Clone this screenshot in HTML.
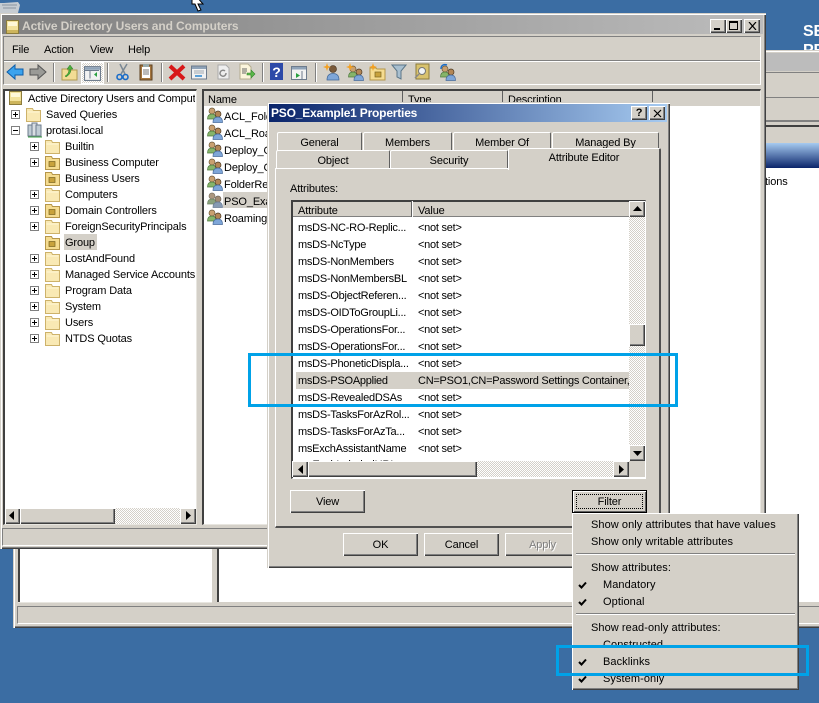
<!DOCTYPE html>
<html><head><meta charset="utf-8"><title>AD</title>
<style>
html,body{margin:0;padding:0}
body{width:819px;height:703px;overflow:hidden;background:#3b6da3;position:relative;font:11px "Liberation Sans",sans-serif;color:#000;letter-spacing:-.13px}
div,span,svg{position:absolute;box-sizing:border-box}
.t{white-space:nowrap;line-height:14px;height:14px;margin-top:2px}
.g{background:#d4d0c8}
.w{background:#fff}
.b{background:#d4d0c8;box-shadow:inset 1px 1px #fff,inset -1px -1px #404040,inset -2px -2px #808080}
.win{background:#d4d0c8;box-shadow:inset 1px 1px #d4d0c8,inset 2px 2px #fff,inset -1px -1px #404040,inset -2px -2px #808080}
.sunk{border-top:1px solid #808080;border-left:1px solid #808080;border-bottom:1px solid #fff;border-right:1px solid #fff}
.pane{background:#fff;border-top:2px solid #404040;border-left:2px solid #404040;border-bottom:1px solid #e8e6e0;border-right:1px solid #e8e6e0}
.chk{background:repeating-conic-gradient(#d4d0c8 0 25%,#fff 0 50%) 0 0/2px 2px}
.tab{background:#d4d0c8;border-top:1px solid #fff;border-left:1px solid #fff;border-right:1px solid #606060;border-radius:2px 2px 0 0}
.c{text-align:center}
.sep{width:2px;height:19px;top:63px;background:linear-gradient(90deg,#808080 50%,#fff 50%)}
.hl{border:3px solid #00a2e8}
.ck{left:578px;width:9px;height:8px}
</style></head><body>
<svg width="0" height="0" style="position:absolute">
<defs>
<symbol id="folder" viewBox="0 0 15 15"><path d="M.5 1.500h6l1 2h7v11H.5z" fill="#f9e9b4" stroke="#cdb26a"/><path d="M1.500 4.500h12v1h-12z" fill="#fff6d6"/></symbol>
<symbol id="ou" viewBox="0 0 15 15"><path d="M.5 1.500h6l1 2h7v11H.5z" fill="#f5dc90" stroke="#b5964a"/><rect x="4" y="6.500" width="6" height="5" fill="#c8a23c" stroke="#7a6420" stroke-width=".7"/></symbol>
<symbol id="group" viewBox="0 0 16 16"><circle cx="5" cy="4" r="3" fill="#c9a070" stroke="#6e5a3a" stroke-width=".7"/><path d="M0.500 12c0-4 2-5 4.500-5s4 1 4 5z" fill="#86b46a" stroke="#4d7a3e" stroke-width=".7"/><circle cx="11" cy="7" r="3" fill="#b38655" stroke="#4d3b25" stroke-width=".7"/><path d="M6 15.500c0-4 2-5.500 5-5.500s4.500 1.500 4.500 5.500z" fill="#7ea6d8" stroke="#4a6c9c" stroke-width=".7"/></symbol>
<symbol id="boxp" viewBox="0 0 9 9"><rect x=".5" y=".5" width="8" height="8" fill="#fff" stroke="#808080"/><path d="M2 4.500h5M4.500 2v5" stroke="#000"/></symbol>
<symbol id="boxm" viewBox="0 0 9 9"><rect x=".5" y=".5" width="8" height="8" fill="#fff" stroke="#808080"/><path d="M2 4.500h5" stroke="#000"/></symbol>
<symbol id="book" viewBox="0 0 13 14"><rect x=".5" y=".5" width="12" height="13" fill="#f3e29c" stroke="#8c7c3c"/><rect x="2" y="2" width="9" height="4" fill="#fff8d8"/><rect x="1" y="10" width="11" height="3" fill="#cdb55c"/></symbol>
<symbol id="check" viewBox="0 0 9 8"><path d="M1 4l2.500 2.500L8 1.500" fill="none" stroke="#000" stroke-width="2"/></symbol>
<symbol id="user" viewBox="0 0 18 18"><circle cx="10" cy="6" r="3.500" fill="#7a5a3a" stroke="#3d2c1c" stroke-width=".6"/><path d="M4 17c0-5 3-6.500 6-6.500s6 1.500 6 6.500z" fill="#7ea6d8" stroke="#3f6596" stroke-width=".7"/></symbol>
<symbol id="spark" viewBox="0 0 8 8"><path d="M4 0l1 3 3 1-3 1-1 3-1-3-3-1 3-1z" fill="#f4a020"/></symbol>
<symbol id="win" viewBox="0 0 16 15"><rect x=".5" y="1.500" width="15" height="13" fill="#f2f2f2" stroke="#6d7b8c"/><rect x="1" y="2" width="14" height="2.500" fill="#8fa3b8"/></symbol>
</defs></svg>

<!-- desktop bits -->
<svg style="left:0;top:0" width="22" height="13"><path d="M0 3h4l14-1 2 3-2 8H0z" fill="#c6ccd2"/><path d="M2 5h15M3 8h13" stroke="#8a95a0"/></svg>
<svg style="left:191px;top:0" width="14" height="14"><path d="M1 0v4l0 0 3 0 3 7 3-1-3-6h5L5-4z" fill="#fff" stroke="#000"/></svg>
<div style="left:803px;top:23px;color:#fff;font:bold 16px/18px 'Liberation Sans',sans-serif;height:18px;white-space:nowrap">SE</div>
<div style="left:803px;top:42px;color:#fff;font:bold 16px/18px 'Liberation Sans',sans-serif;height:18px;white-space:nowrap">PR</div>

<!-- back window -->
<div class="win" style="left:13px;top:50px;width:830px;height:578px"></div>
<div style="left:16px;top:53px;width:815px;height:18px;background:#bcbcbc"></div>
<div style="left:16px;top:72px;width:810px;height:1px;background:#808080"></div>
<div style="left:16px;top:97px;width:810px;height:1px;background:#808080"></div>
<div style="left:16px;top:120px;width:810px;height:2px;background:#808080"></div>
<div style="left:16px;top:125px;width:810px;height:2px;background:#404040"></div>
<div style="left:16px;top:143px;width:810px;height:25px;background:linear-gradient(#a6caf0,#0a246a)"></div>
<div class="w" style="left:18px;top:168px;width:801px;height:435px"></div>
<div style="left:18px;top:540px;width:2px;height:62px;background:#404040"></div>
<div class="g" style="left:212px;top:540px;width:5px;height:64px"></div>
<div style="left:217px;top:540px;width:2px;height:62px;background:#404040"></div>
<div class="g" style="left:16px;top:602px;width:810px;height:24px"></div>
<div style="left:18px;top:602px;width:194px;height:1px;background:#e8e6e0"></div>
<div class="sunk" style="left:17px;top:606px;width:810px;height:18px"></div>
<div class="t" style="left:765px;top:173px">tions</div>

<!-- main window -->
<div class="win" style="left:0;top:13px;width:766px;height:536px"></div>
<div style="left:2px;top:15px;width:761px;height:19px;background:linear-gradient(90deg,#808080,#bcbcbc)"></div>
<svg style="left:6px;top:20px" width="13" height="14"><use href="#book"/></svg>
<div class="t" style="left:22px;top:17px;color:#d4d0c8;font-weight:bold;font-size:12px;letter-spacing:-.1px">Active Directory Users and Computers</div>
<div class="b" style="left:710px;top:19px;width:16px;height:14px"></div>
<div style="left:714px;top:28px;width:6px;height:2px;background:#000"></div>
<div class="b" style="left:726px;top:19px;width:16px;height:14px"></div>
<div style="left:729px;top:21px;width:9px;height:9px;border:1px solid #000;border-top-width:2px"></div>
<div class="b" style="left:744px;top:19px;width:16px;height:14px"></div>
<svg style="left:748px;top:22px" width="9" height="8"><path d="M1 0l7 8M8 0L1 8" stroke="#000" stroke-width="1.200"/></svg>

<div class="sunk" style="left:3px;top:36px;width:758px;height:49px"></div>
<div style="left:4px;top:60px;width:756px;height:1px;background:#808080"></div>
<div style="left:4px;top:61px;width:756px;height:1px;background:#fff"></div>
<div class="t" style="left:12px;top:41px">File</div>
<div class="t" style="left:44px;top:41px">Action</div>
<div class="t" style="left:90px;top:41px">View</div>
<div class="t" style="left:128px;top:41px">Help</div>

<!-- toolbar -->
<svg style="left:6px;top:63px" width="18" height="18"><path d="M1 9l8-7v4h8v6H9v4z" fill="#3ba3ee" stroke="#0e5da8"/></svg>
<svg style="left:29px;top:63px" width="18" height="18"><path d="M17 9L9 2v4H1v6h8v4z" fill="#9a9a96" stroke="#555"/></svg>
<div class="sep" style="left:53px"></div>
<svg style="left:61px;top:63px" width="17" height="18"><path d="M1 6h5l1 1h9v10H1z" fill="#f2dc94" stroke="#b19a50"/><path d="M4 13c2-1 4-3 4-7h-2l3-4 3 4h-2c0 4-2 6-5 8z" fill="#4cae3c" stroke="#2a7a20" stroke-width=".5"/></svg>
<div style="left:81px;top:62px;width:23px;height:22px;border:1px solid #fff;background:repeating-conic-gradient(#d4d0c8 0 25%,#fff 0 50%) 0 0/2px 2px"></div>
<svg style="left:84px;top:65px" width="17" height="16"><use href="#win"/><path d="M6 5.500v8M1 5.500h14" stroke="#6d7b8c"/><path d="M13 7v5l-3-2.500z" fill="#2aa040"/></svg>
<div class="sep" style="left:107px"></div>
<svg style="left:116px;top:63px" width="13" height="18"><path d="M11 1L5 11M4 1l5 10" stroke="#7a8894" stroke-width="1.500"/><circle cx="3.500" cy="14" r="2.500" fill="none" stroke="#1a6cc8" stroke-width="1.600"/><circle cx="9.500" cy="14" r="2.500" fill="none" stroke="#1a6cc8" stroke-width="1.600"/></svg>
<svg style="left:139px;top:63px" width="14" height="18"><rect x="1" y="2" width="12" height="15" fill="#a5763e" stroke="#5d4020"/><rect x="3" y="4" width="8" height="11" fill="#fff"/><path d="M4 7h6M4 9h6M4 11h6" stroke="#777"/><rect x="4" y="1" width="6" height="3" fill="#9aa"/></svg>
<div class="sep" style="left:161px"></div>
<svg style="left:168px;top:63px" width="18" height="18"><path d="M2 3l14 13M16 3L2 16" stroke="#d81818" stroke-width="4"/></svg>
<svg style="left:191px;top:64px" width="16" height="16"><use href="#win"/><path d="M3 7h10M3 9h10" stroke="#a0a8b0"/><rect x="4" y="11" width="7" height="2" fill="#5aa0d8"/></svg>
<svg style="left:215px;top:64px" width="16" height="16"><path d="M3 1h8l3 3v11H3z" fill="#eee" stroke="#aaa"/><path d="M11 9a3 3 0 1 1-1-2" fill="none" stroke="#888" stroke-width="1.500"/></svg>
<svg style="left:238px;top:63px" width="18" height="18"><path d="M2 1h8l3 3v12H2z" fill="#fbf5dc" stroke="#b5ad90"/><path d="M4 6h5M4 8h5M4 10h4" stroke="#666"/><path d="M9 10h4V7l4 4-4 4v-3H9z" fill="#5cb84a" stroke="#2f8228" stroke-width=".6"/></svg>
<div class="sep" style="left:262px"></div>
<svg style="left:270px;top:63px" width="13" height="17"><rect width="13" height="17" fill="#2d4aa8"/><text x="6.500" y="14" font-family="Liberation Sans" font-weight="bold" font-size="14" fill="#fff" text-anchor="middle">?</text></svg>
<svg style="left:291px;top:65px" width="16" height="15"><use href="#win"/><path d="M5 8v5l4-2.500z" fill="#2aa040"/><path d="M11 6v8" stroke="#6d7b8c"/></svg>
<div class="sep" style="left:315px"></div>
<svg style="left:323px;top:63px" width="18" height="18"><use href="#user"/><use href="#spark" width="8" height="8"/></svg>
<svg style="left:346px;top:63px" width="18" height="18"><use href="#group" x="2" y="2" width="16" height="16"/><use href="#spark" width="8" height="8"/></svg>
<svg style="left:369px;top:63px" width="17" height="18"><path d="M1 5h6l1 1h8v11H1z" fill="#f5dc90" stroke="#b5964a"/><rect x="6" y="9" width="6" height="5" fill="#c8a23c" stroke="#7a6420" stroke-width=".7"/><use href="#spark" width="8" height="8"/></svg>
<svg style="left:391px;top:64px" width="16" height="16"><path d="M1 1h14l-5 6v8l-4-2V7z" fill="#a8bfcf" stroke="#5b7688"/></svg>
<svg style="left:414px;top:63px" width="16" height="17"><rect x="2" y="1" width="13" height="15" fill="#d8c26e" stroke="#8c7c3c"/><circle cx="8" cy="8" r="3.500" fill="#f0f4f6" stroke="#777"/><path d="M5 11l-4 4" stroke="#888" stroke-width="1.500"/></svg>
<svg style="left:438px;top:62px" width="18" height="19"><path d="M3 7c0-4 3-5 6-4" fill="none" stroke="#1a6cc8" stroke-width="1.500"/><use href="#group" x="2" y="3" width="16" height="16"/></svg>

<!-- tree -->
<div class="pane" style="left:3px;top:89px;width:194px;height:436px"></div>
<svg style="left:9px;top:91px" width="13" height="14"><use href="#book"/></svg>
<div class="t" style="left:28px;top:90px;width:167px;overflow:hidden">Active Directory Users and Computers</div>
<svg style="left:11px;top:110px" width="9" height="9"><use href="#boxp"/></svg>
<svg style="left:26px;top:107px" width="15" height="15"><use href="#folder"/></svg>
<div class="t" style="left:46px;top:106px">Saved Queries</div>
<svg style="left:11px;top:126px" width="9" height="9"><use href="#boxm"/></svg>
<svg style="left:27px;top:122px" width="15" height="16"><rect x="1" y="3" width="5" height="11" fill="#c0ccd4" stroke="#6d7b8c"/><rect x="5" y="1" width="5" height="13" fill="#d8dee2" stroke="#6d7b8c"/><rect x="9" y="3" width="5" height="11" fill="#c0ccd4" stroke="#6d7b8c"/><path d="M1 15h14" stroke="#3aa040"/></svg>
<div class="t" style="left:46px;top:122px">protasi.local</div>

<svg style="left:30px;top:142px" width="9" height="9"><use href="#boxp"/></svg>
<svg style="left:45px;top:139px" width="15" height="15"><use href="#folder"/></svg>
<div class="t" style="left:65px;top:138px">Builtin</div>
<svg style="left:30px;top:158px" width="9" height="9"><use href="#boxp"/></svg>
<svg style="left:45px;top:155px" width="15" height="15"><use href="#ou"/></svg>
<div class="t" style="left:65px;top:154px">Business Computer</div>
<svg style="left:45px;top:171px" width="15" height="15"><use href="#ou"/></svg>
<div class="t" style="left:65px;top:170px">Business Users</div>
<svg style="left:30px;top:190px" width="9" height="9"><use href="#boxp"/></svg>
<svg style="left:45px;top:187px" width="15" height="15"><use href="#folder"/></svg>
<div class="t" style="left:65px;top:186px">Computers</div>
<svg style="left:30px;top:206px" width="9" height="9"><use href="#boxp"/></svg>
<svg style="left:45px;top:203px" width="15" height="15"><use href="#ou"/></svg>
<div class="t" style="left:65px;top:202px">Domain Controllers</div>
<svg style="left:30px;top:222px" width="9" height="9"><use href="#boxp"/></svg>
<svg style="left:45px;top:219px" width="15" height="15"><use href="#folder"/></svg>
<div class="t" style="left:65px;top:218px">ForeignSecurityPrincipals</div>
<svg style="left:45px;top:235px" width="15" height="15"><use href="#ou"/></svg>
<div class="g" style="left:64px;top:234px;width:33px;height:16px"></div>
<div class="t" style="left:65px;top:234px">Group</div>
<svg style="left:30px;top:254px" width="9" height="9"><use href="#boxp"/></svg>
<svg style="left:45px;top:251px" width="15" height="15"><use href="#folder"/></svg>
<div class="t" style="left:65px;top:250px">LostAndFound</div>
<svg style="left:30px;top:270px" width="9" height="9"><use href="#boxp"/></svg>
<svg style="left:45px;top:267px" width="15" height="15"><use href="#folder"/></svg>
<div class="t" style="left:65px;top:266px">Managed Service Accounts</div>
<svg style="left:30px;top:286px" width="9" height="9"><use href="#boxp"/></svg>
<svg style="left:45px;top:283px" width="15" height="15"><use href="#folder"/></svg>
<div class="t" style="left:65px;top:282px">Program Data</div>
<svg style="left:30px;top:302px" width="9" height="9"><use href="#boxp"/></svg>
<svg style="left:45px;top:299px" width="15" height="15"><use href="#folder"/></svg>
<div class="t" style="left:65px;top:298px">System</div>
<svg style="left:30px;top:318px" width="9" height="9"><use href="#boxp"/></svg>
<svg style="left:45px;top:315px" width="15" height="15"><use href="#folder"/></svg>
<div class="t" style="left:65px;top:314px">Users</div>
<svg style="left:30px;top:334px" width="9" height="9"><use href="#boxp"/></svg>
<svg style="left:45px;top:331px" width="15" height="15"><use href="#folder"/></svg>
<div class="t" style="left:65px;top:330px">NTDS Quotas</div>

<!-- tree hscroll -->
<div class="chk" style="left:5px;top:508px;width:191px;height:16px"></div>
<div class="b" style="left:5px;top:508px;width:15px;height:16px"></div>
<svg style="left:9px;top:511px" width="6" height="10"><path d="M5 0v9L0 4.500z"/></svg>
<div class="b" style="left:20px;top:508px;width:95px;height:16px"></div>
<div class="b" style="left:180px;top:508px;width:16px;height:16px"></div>
<svg style="left:186px;top:511px" width="6" height="10"><path d="M0 0v9l5-4.500z"/></svg>

<!-- list -->
<div class="pane" style="left:202px;top:89px;width:559px;height:436px"></div>
<div class="g" style="left:204px;top:91px;width:556px;height:15px"></div>
<div style="left:402px;top:91px;width:1px;height:15px;background:#606060"></div>
<div style="left:502px;top:91px;width:1px;height:15px;background:#606060"></div>
<div style="left:652px;top:91px;width:1px;height:15px;background:#606060"></div>
<div class="t" style="left:208px;top:91px">Name</div>
<div class="t" style="left:408px;top:91px">Type</div>
<div class="t" style="left:508px;top:91px">Description</div>
<svg style="left:207px;top:107px" width="16" height="16"><use href="#group"/></svg>
<div class="t" style="left:224px;top:108px">ACL_Folder</div>
<svg style="left:207px;top:124px" width="16" height="16"><use href="#group"/></svg>
<div class="t" style="left:224px;top:125px">ACL_Roaming</div>
<svg style="left:207px;top:141px" width="16" height="16"><use href="#group"/></svg>
<div class="t" style="left:224px;top:142px">Deploy_Office</div>
<svg style="left:207px;top:158px" width="16" height="16"><use href="#group"/></svg>
<div class="t" style="left:224px;top:159px">Deploy_Chrome</div>
<svg style="left:207px;top:175px" width="16" height="16"><use href="#group"/></svg>
<div class="t" style="left:224px;top:176px">FolderRedirect</div>
<svg style="left:207px;top:192px;opacity:.72;filter:brightness(.7)" width="16" height="16"><use href="#group"/></svg>
<div class="g" style="left:223px;top:192px;width:50px;height:16px"></div>
<div class="t" style="left:224px;top:193px">PSO_Example1</div>
<svg style="left:207px;top:209px" width="16" height="16"><use href="#group"/></svg>
<div class="t" style="left:224px;top:210px">RoamingProfiles</div>

<!-- main status bar -->
<div class="sunk" style="left:2px;top:528px;width:761px;height:18px"></div>

<!-- dialog -->
<div class="win" style="left:267px;top:102px;width:403px;height:466px"></div>
<div style="left:269px;top:104px;width:398px;height:18px;background:linear-gradient(90deg,#0a246a,#a6caf0)"></div>
<div class="t" style="left:271px;top:104px;color:#fff;font-weight:bold;font-size:12px;letter-spacing:-.2px">PSO_Example1 Properties</div>
<div class="b" style="left:631px;top:106px;width:16px;height:14px"></div>
<div class="t c" style="left:631px;top:104px;width:16px;font-weight:bold">?</div>
<div class="b" style="left:649px;top:106px;width:16px;height:14px"></div>
<svg style="left:653px;top:109px" width="9" height="9"><path d="M1 1l7 7M8 1L1 8" stroke="#000" stroke-width="1.200"/></svg>

<div class="tab c" style="left:277px;top:132px;width:85px;height:20px;line-height:20px">General</div>
<div class="tab c" style="left:363px;top:132px;width:89px;height:20px;line-height:20px">Members</div>
<div class="tab c" style="left:453px;top:132px;width:98px;height:20px;line-height:20px">Member Of</div>
<div class="tab c" style="left:552px;top:132px;width:107px;height:20px;line-height:20px">Managed By</div>
<div class="tab c" style="left:276px;top:150px;width:114px;height:20px;line-height:20px">Object</div>
<div class="tab c" style="left:390px;top:150px;width:118px;height:20px;line-height:20px">Security</div>
<div style="left:275px;top:168px;width:386px;height:360px;background:#d4d0c8;border-top:1px solid #fff;border-left:1px solid #fff;border-right:2px solid #505050;border-bottom:2px solid #505050"></div>
<div class="tab c" style="left:508px;top:148px;width:153px;height:22px;line-height:18px;border-right:2px solid #505050;z-index:1">Attribute Editor</div>
<div style="left:509px;top:168px;width:150px;height:3px;background:#d4d0c8;z-index:1"></div>
<div class="t" style="left:290px;top:180px">Attributes:</div>

<!-- attr list -->
<div class="w" style="left:291px;top:200px;width:355px;height:279px;border-top:2px solid #404040;border-left:2px solid #404040;border-bottom:1px solid #fff;border-right:1px solid #fff"></div>
<div class="g" style="left:293px;top:202px;width:336px;height:15px;box-shadow:inset 0 -1px #808080"></div>
<div style="left:411px;top:201px;width:2px;height:16px;background:linear-gradient(90deg,#606060 50%,#fff 50%)"></div>
<div class="t" style="left:298px;top:202px">Attribute</div>
<div class="t" style="left:418px;top:202px">Value</div>

<div class="chk" style="left:629px;top:202px;width:16px;height:260px"></div>
<div class="b" style="left:629px;top:201px;width:16px;height:16px"></div>
<svg style="left:633px;top:206px" width="9" height="5"><path d="M0 5l4.500-5L9 5z"/></svg>
<div class="b" style="left:629px;top:324px;width:16px;height:22px"></div>
<div class="b" style="left:629px;top:445px;width:16px;height:16px"></div>
<svg style="left:633px;top:451px" width="9" height="5"><path d="M0 0l4.500 5L9 0z"/></svg>

<div class="g" style="left:296px;top:372px;width:333px;height:17px"></div>
<div style="left:0;top:0;letter-spacing:-.25px">
<div class="t" style="left:298px;top:219px">msDS-NC-RO-Replic...</div><div class="t" style="left:418px;top:219px">&lt;not set&gt;</div>
<div class="t" style="left:298px;top:236px">msDS-NcType</div><div class="t" style="left:418px;top:236px">&lt;not set&gt;</div>
<div class="t" style="left:298px;top:253px">msDS-NonMembers</div><div class="t" style="left:418px;top:253px">&lt;not set&gt;</div>
<div class="t" style="left:298px;top:270px">msDS-NonMembersBL</div><div class="t" style="left:418px;top:270px">&lt;not set&gt;</div>
<div class="t" style="left:298px;top:287px">msDS-ObjectReferen...</div><div class="t" style="left:418px;top:287px">&lt;not set&gt;</div>
<div class="t" style="left:298px;top:304px">msDS-OIDToGroupLi...</div><div class="t" style="left:418px;top:304px">&lt;not set&gt;</div>
<div class="t" style="left:298px;top:321px">msDS-OperationsFor...</div><div class="t" style="left:418px;top:321px">&lt;not set&gt;</div>
<div class="t" style="left:298px;top:338px">msDS-OperationsFor...</div><div class="t" style="left:418px;top:338px">&lt;not set&gt;</div>
<div class="t" style="left:298px;top:355px">msDS-PhoneticDispla...</div><div class="t" style="left:418px;top:355px">&lt;not set&gt;</div>
<div class="t" style="left:298px;top:372px">msDS-PSOApplied</div><div class="t" style="left:418px;top:372px;width:211px;overflow:hidden">CN=PSO1,CN=Password Settings Container,CN=System</div>
<div class="t" style="left:298px;top:389px">msDS-RevealedDSAs</div><div class="t" style="left:418px;top:389px">&lt;not set&gt;</div>
<div class="t" style="left:298px;top:406px">msDS-TasksForAzRol...</div><div class="t" style="left:418px;top:406px">&lt;not set&gt;</div>
<div class="t" style="left:298px;top:423px">msDS-TasksForAzTa...</div><div class="t" style="left:418px;top:423px">&lt;not set&gt;</div>
<div class="t" style="left:298px;top:440px">msExchAssistantName</div><div class="t" style="left:418px;top:440px">&lt;not set&gt;</div>
</div>
<div style="left:298px;top:458px;width:120px;height:3px;overflow:hidden"><div class="t" style="left:0;top:0;margin:0">msExchLabeledURI</div></div>

<div class="chk" style="left:293px;top:461px;width:336px;height:16px"></div>
<div class="b" style="left:292px;top:461px;width:16px;height:16px"></div>
<svg style="left:298px;top:465px" width="5" height="9"><path d="M5 0v9L0 4.500z"/></svg>
<div class="b" style="left:308px;top:461px;width:169px;height:16px"></div>
<div class="b" style="left:613px;top:461px;width:16px;height:16px"></div>
<svg style="left:619px;top:465px" width="5" height="9"><path d="M0 0v9l5-4.500z"/></svg>
<div class="g" style="left:629px;top:461px;width:16px;height:16px"></div>

<div class="b c" style="left:290px;top:490px;width:75px;height:23px;line-height:24px">View</div>
<div class="c" style="left:572px;top:490px;width:75px;height:23px;line-height:23px;background:#d4d0c8;border:1px solid #000;box-shadow:inset 1px 1px #fff,inset -1px -1px #606060">Filter</div>
<div style="left:576px;top:494px;width:67px;height:15px;border:1px dotted #000"></div>
<div class="b c" style="left:343px;top:533px;width:75px;height:23px;line-height:24px">OK</div>
<div class="b c" style="left:424px;top:533px;width:75px;height:23px;line-height:24px">Cancel</div>
<div class="b c" style="left:505px;top:533px;width:75px;height:23px;line-height:24px;color:#808080;text-shadow:1px 1px #fff">Apply</div>

<!-- popup menu -->
<div class="win" style="left:572px;top:513px;width:227px;height:177px;box-shadow:inset 1px 1px #fff,inset -1px -1px #404040,inset -2px -2px #808080"></div>
<div style="left:0;top:0;letter-spacing:.07px">
<div class="t" style="left:591px;top:516px">Show only attributes that have values</div>
<div class="t" style="left:591px;top:533px">Show only writable attributes</div>
<div class="t" style="left:591px;top:559px">Show attributes:</div>
<div class="t" style="left:603px;top:576px">Mandatory</div>
<div class="t" style="left:603px;top:593px">Optional</div>
<div class="t" style="left:591px;top:619px">Show read-only attributes:</div>
<div class="t" style="left:603px;top:636px">Constructed</div>
<div class="t" style="left:603px;top:653px">Backlinks</div>
<div class="t" style="left:603px;top:670px">System-only</div>
</div>
<div style="left:576px;top:553px;width:219px;height:2px;background:linear-gradient(#808080 50%,#fff 50%)"></div>
<svg class="ck" style="top:581px"><use href="#check" width="9" height="8"/></svg>
<svg class="ck" style="top:598px"><use href="#check" width="9" height="8"/></svg>
<div style="left:576px;top:613px;width:219px;height:2px;background:linear-gradient(#808080 50%,#fff 50%)"></div>
<svg class="ck" style="top:658px"><use href="#check" width="9" height="8"/></svg>
<svg class="ck" style="top:675px"><use href="#check" width="9" height="8"/></svg>

<!-- highlights -->
<div class="hl" style="left:248px;top:353px;width:430px;height:54px"></div>
<div class="hl" style="left:556px;top:645px;width:253px;height:31px"></div>
</body></html>
